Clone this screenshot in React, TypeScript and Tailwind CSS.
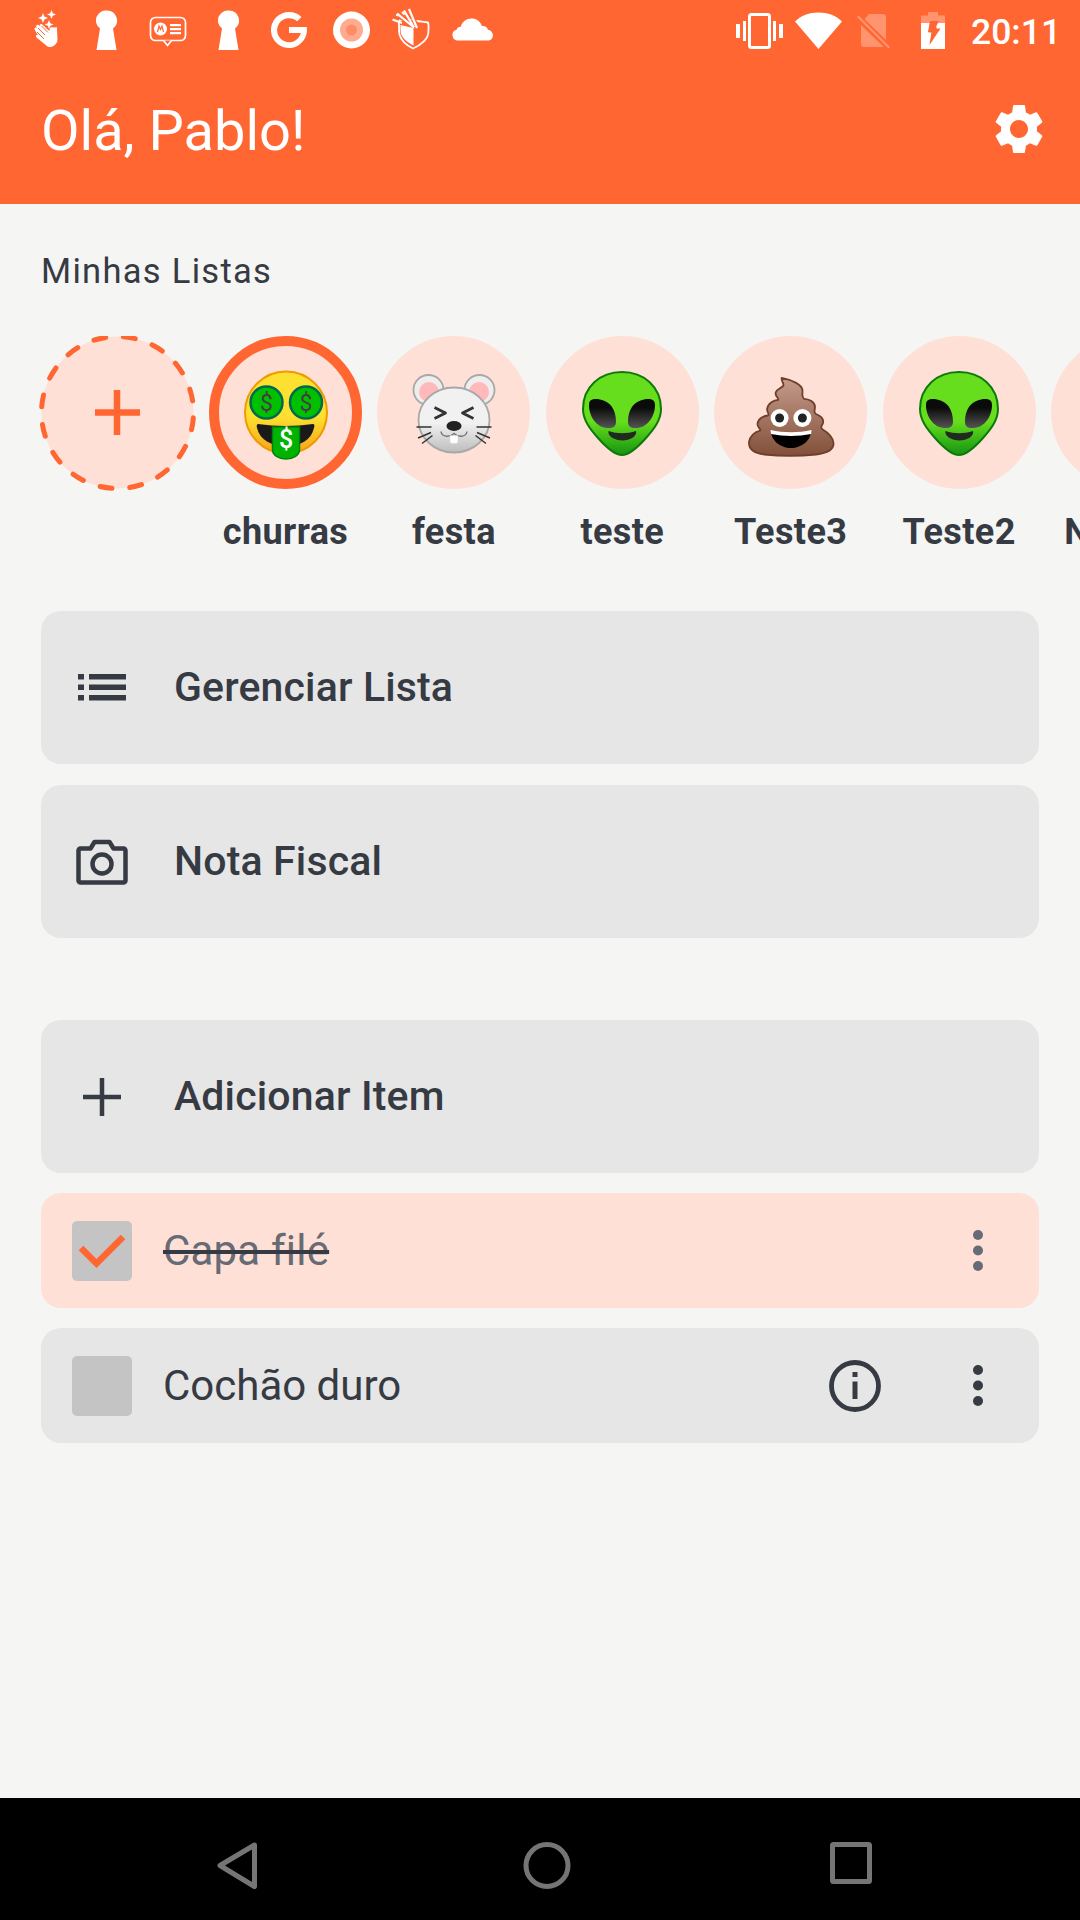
import React from "react";

const INK = "#363a43";
const ORANGE = "#ff6631";

function Sb({ w, ml, children }: { w: number; ml: string; children: React.ReactNode }) {
  return (
    <svg width={w} height={60} viewBox={`0 0 ${w} 60`} className={`shrink-0 ${ml}`}>
      {children}
    </svg>
  );
}

function StatusBar() {
  return (
    <div className="flex h-[60px] items-start text-white">
      <Sb w={26} ml="ml-[33px]">
        <g fill="#fff">
          <path d="M10 13l1.400 3.600L15 18l-3.600 1.400L10 23l-1.400-3.600L5 18l3.600-1.400zM18.500 10l1.300 3.200 3.200 1.300-3.200 1.300-1.300 3.200-1.300-3.200-3.200-1.300 3.200-1.300zM16 20l1.300 3.200 3.200 1.300-3.200 1.300-1.300 3.200-1.300-3.200-3.200-1.300 3.200-1.300z" />
          <path d="M2 30c-1.500-1.500.3-3.500 2-2l-.6-.7c-1-1.600 1-3.300 2.400-2l1 1c-.8-1.600 1.200-3 2.500-1.800l7 6.500.4-2.300c.2-1.400 2.200-1.800 3.800-1.200l3.400-.3.6 12.500c0 3.500-3.500 6.800-7 7.300-2 .2-3.200-.4-4.500-1.700L3.500 37.500c-1.500-1.700.5-3.500 2-2.200-2-2-3-3.400-3.500-5.300z" />
        </g>
        <path d="M5 28l7 7M4 32l7 7M8.500 26l6.500 6.500" stroke={ORANGE} strokeWidth="1" fill="none" />
      </Sb>
      <Sb w={22} ml="ml-[37px]">
        <path d="M11 10.500a10 10 0 0 1 6 18l3.500 21.500H.5L4 28.500a10 10 0 0 1 7-18z" fill="#fff" />
      </Sb>
      <Sb w={38} ml="ml-[31px]">
        <rect x="1.500" y="17.500" width="35" height="23" rx="5" fill="none" stroke="#fff" strokeWidth="1.700" />
        <path d="M14.500 40.500l4 5 4-5" fill={ORANGE} stroke="#fff" strokeWidth="1.700" />
        <circle cx="11.500" cy="29" r="6.500" fill="#fff" />
        <path d="M8.500 32l1.500-6 1.500 3.500L13 26l1.500 6" fill="none" stroke={ORANGE} strokeWidth="1.200" />
        <path d="M21 24h11v2.200H21zM21 28h11v2.200H21zM21 32h11v2.200H21z" fill="#fff" />
      </Sb>
      <Sb w={22} ml="ml-[31px]">
        <path d="M11 10.500a10 10 0 0 1 6 18l3.500 21.500H.5L4 28.500a10 10 0 0 1 7-18z" fill="#fff" />
      </Sb>
      <Sb w={36} ml="ml-[31px]">
        <path d="M18 12a18 18 0 0 1 12.500 5l-4.300 4.300A12 12 0 1 0 29.800 33H18v-6h17.700A18 18 0 1 1 18 12z" fill="#fff" />
      </Sb>
      <Sb w={37} ml="ml-[26px]">
        <circle cx="18.500" cy="30" r="18.500" fill="#fff" />
        <circle cx="18.500" cy="30" r="11.500" fill="#ffab8f" />
        <circle cx="18.500" cy="30" r="5.500" fill="#ff8c66" />
      </Sb>
      <Sb w={40} ml="ml-[21px]">
        <path d="M9 20c5-.5 8 0 12-1 2 1.500 3 1.500 4 2 4 .3 7 1 12 1.500.5 1 .5 8 .3 10.500-.5 6-7 12-15.300 15.500-6-3-12-8-13.500-14-.6-3-.5-7-.5-12z" fill="none" stroke="#fff" strokeWidth="1.800" />
        <path d="M9.500 25l13 3v17.500c-6-3-11-7-12.500-12-.5-2.500-.5-5-.5-8.500z" fill="#fff" />
        <path d="M1 19l9-4 2 1 3-6 3 .5 1-1.500 5 9 6 10-3-1-7-8-5 4-7-4z" fill={ORANGE} />
        <path d="M1.500 19.500l9.500 3.500M6 13.500l17 14M13 10.500l10 17M18 9l8 19" stroke="#fff" strokeWidth="2.200" fill="none" />
        <path d="M5 15l4 .5M11 12l2.500 2.500" stroke="#fff" strokeWidth="2" />
      </Sb>
      <Sb w={42} ml="ml-[20px]">
        <path d="M7 40.500a5.500 5.500 0 0 1-1.500-10.800c.5-2 2.500-3.200 4.300-3 1.300-5 5.500-8.200 10.700-8.200 4.800 0 8.800 2.600 10.400 7.500 3-.5 5.500 1 6 3.800a5.500 5.500 0 0 1 5 5.700c0 2.800-2 5-5 5z" fill="#fff" />
      </Sb>

      <Sb w={47} ml="ml-[243px]">
        <path d="M0 24h4v14H0zM7 21h3v20H7zM37 21h3v20h-3zM43 24h4v14h-4z" fill="#fff" />
        <rect x="13.500" y="14.500" width="20" height="33" rx="2" fill="none" stroke="#fff" strokeWidth="3" />
      </Sb>
      <Sb w={47} ml="ml-[12px]">
        <path d="M0 21.500C6 15.500 14 12.500 23.500 12.500s17.500 3 23.500 9L23.500 49z" fill="#fff" />
      </Sb>
      <Sb w={34} ml="ml-[15px]">
        <g fill="#fff" opacity="0.3">
          <path d="M12 14h15l2 2v24L7.500 19.300z" />
          <path d="M4 25v20l2 2h20.800z" />
          <path d="M0 17l1.500-1.500L33 47l-1.500 1.500z" />
        </g>
      </Sb>
      <Sb w={24} ml="ml-[30px]">
        <path d="M7 12h10v3.500h7V23H0v-7.500h7z" fill="#fff" opacity="0.3" />
        <path d="M0 23h9l-1.500 9.500h5L8 44l8-16.500h-5L17 23h7v26H0z" fill="#fff" />
        <path d="M9 21h8.500l-3 7.500h5L8.500 45l2-13H7z" fill={ORANGE} />
      </Sb>
      <div className="mt-[2px] ml-[26px] text-[35.5px] leading-[60px] font-medium">20:11</div>
    </div>
  );
}

function MoneyFace() {
  return (
    <svg width="100" height="100" viewBox="0 0 100 100">
      <defs>
        <linearGradient id="mf" x1="0" y1="0" x2="0" y2="1">
          <stop offset="0.55" stopColor="#fde030" />
          <stop offset="1" stopColor="#f7a11c" />
        </linearGradient>
      </defs>
      <circle cx="50" cy="49.500" r="41" fill="url(#mf)" stroke="#ee9a00" strokeWidth="2" />
      <circle cx="30.500" cy="39.500" r="16" fill="#00c000" stroke="#006a50" strokeWidth="2.500" />
      <circle cx="70" cy="39.500" r="16" fill="#00c000" stroke="#006a50" strokeWidth="2.500" />
      <text x="30.500" y="47.500" textAnchor="middle" fontSize="23" fill="#404040" fontFamily="Roboto, sans-serif">$</text>
      <text x="70" y="47.500" textAnchor="middle" fontSize="23" fill="#404040" fontFamily="Roboto, sans-serif">$</text>
      <path d="M22 61c18 2.500 37 2.500 55 0 2 0 1.500 3 1 4-3 12-13 18-28 18S24 77 21 65c-.5-1.500-.5-4 1-4z" fill="#1a1a1a" />
      <path d="M36.500 64h27v23a12 8 0 0 1-27 0z" fill="#00b300" stroke="#00810f" strokeWidth="1.500" />
      <text x="50" y="85" textAnchor="middle" fontSize="25" fontWeight="500" fill="#fff" fontFamily="Roboto, sans-serif">$</text>
    </svg>
  );
}

function MouseFace() {
  return (
    <svg width="100" height="100" viewBox="0 0 100 100">
      <defs>
        <linearGradient id="mo" x1="0" y1="0" x2="0" y2="1">
          <stop offset="0.55" stopColor="#f1f1f1" />
          <stop offset="1" stopColor="#bdbdbd" />
        </linearGradient>
      </defs>
      <circle cx="24.500" cy="27" r="15" fill="#eeeeee" stroke="#a8a8a8" strokeWidth="1.800" />
      <circle cx="75.500" cy="27" r="15" fill="#eeeeee" stroke="#a8a8a8" strokeWidth="1.800" />
      <circle cx="25" cy="29" r="10" fill="#ffb9bb" />
      <circle cx="75" cy="29" r="10" fill="#ffb9bb" />
      <ellipse cx="50" cy="57" rx="35.500" ry="32.500" fill="url(#mo)" stroke="#a8a8a8" strokeWidth="1.800" />
      <path d="M30.500 44.500l11 5.500-11 5.500M69.500 44.500l-11 5.500 11 5.500" fill="none" stroke="#333" strokeWidth="2.800" strokeLinejoin="round" />
      <path d="M37 68.500c1 6 9 6 13 2 4 4 12 4 13-2" fill="none" stroke="#777" strokeWidth="1.500" />
      <path d="M46 72.500h8v6a2 2 0 0 1-2 2h-4a2 2 0 0 1-2-2z" fill="#fff" stroke="#ccc" strokeWidth="0.400" />
      <ellipse cx="50" cy="63" rx="7.500" ry="5" fill="#222" />
      <path d="M12.500 64h15M14 75l13-5.500M18 80.500l10.500-8M87.500 64h-15M86 75l-13-5.500M82 80.500l-10.500-8" stroke="#333" strokeWidth="1.500" fill="none" />
    </svg>
  );
}

function AlienFace() {
  return (
    <svg width="100" height="100" viewBox="0 0 100 100">
      <defs>
        <linearGradient id="al" x1="0" y1="0" x2="0" y2="1">
          <stop offset="0.6" stopColor="#66dd1d" />
          <stop offset="1" stopColor="#159312" />
        </linearGradient>
        <linearGradient id="ale" x1="0" y1="0" x2="0" y2="1">
          <stop offset="0.3" stopColor="#0b0b0b" />
          <stop offset="1" stopColor="#555" />
        </linearGradient>
      </defs>
      <path d="M50 9c22 0 39 15 39 37 0 11-7 20-15 29-8 9-17 17-24 17s-16-8-24-17C18 66 11 57 11 46 11 24 28 9 50 9z" fill="url(#al)" stroke="#0b7a0b" strokeWidth="2" />
      <path d="M17 42c0-6 5-6.500 11-5.500 10 1.500 16 10 16 22 0 6-4 7-9 6.500-10-.5-18-11-18-23z" fill="url(#ale)" />
      <path d="M83 42c0-6-5-6.500-11-5.500-10 1.500-16 10-16 22 0 6 4 7 9 6.500 10-.5 18-11 18-23z" fill="url(#ale)" />
      <path d="M36.500 68c9 3 18 3 27.500 0 1.500 5-6 9.500-13.500 9.500S35 73 36.500 68z" fill="#22291e" />
    </svg>
  );
}

function PoopFace() {
  return (
    <svg width="100" height="100" viewBox="0 0 100 100">
      <defs>
        <linearGradient id="po" x1="0" y1="0" x2="0" y2="1">
          <stop offset="0" stopColor="#c69c8c" />
          <stop offset="1" stopColor="#82503a" />
        </linearGradient>
      </defs>
      <path
        d="M40.700 14.800C52 17 61 22 61.400 27C62 31 60 33 63 35.800C68 36 74 39 74 44C74 48 72 49 75 51C80 53 83 56 82 60C81 63 79 64 81 66C86 69 92 73 92.500 80C93 86 88 90 75 91.500C60 93 38 93 23.400 91.500C12 90 7.500 86 8 79C9 73 14 69 19.300 67.500C20 66 16 64 16.500 60.800C17 56 22 53 27 52.500C29 51 25.500 49 26.200 45.800C27 40 33 37 37.200 36.800C38 35 33.500 33 34.800 29.200C36 26 41 25 42.400 22.500C43 20 40 18 40.700 14.800z"
        fill="url(#po)"
        stroke="#6d3f2c"
        strokeWidth="1.800"
        strokeLinejoin="round"
      />
      <circle cx="38.600" cy="55" r="9" fill="#fff" />
      <circle cx="61.400" cy="55" r="9" fill="#fff" />
      <circle cx="38.600" cy="55" r="4.500" fill="#222" />
      <circle cx="61.400" cy="55" r="4.500" fill="#222" />
      <path d="M30 68c13 2.500 27 2.500 40 0 0 9-9 17-20 17s-20-8-20-17z" fill="#000" />
      <path d="M29.500 67c13.500 3 27.500 3 41 0l-.4 4c-13.500 2.500-26.700 2.500-40 0z" fill="#fff" />
    </svg>
  );
}

function Bubble({ label, active, children }: { label: string; active?: boolean; children?: React.ReactNode }) {
  return (
    <div className="flex w-[153px] shrink-0 flex-col items-center">
      <div
        className={`flex h-[153px] w-[153px] items-center justify-center rounded-full bg-[#ffe0d6] ${active ? "border-[10px] border-[#ff6631]" : ""}`}
      >
        {children}
      </div>
      <div className="mt-[23px] text-[36px] leading-[40px] font-bold tracking-[0.4px] whitespace-nowrap text-[#363a43]">{label}</div>
    </div>
  );
}

function Card({ icon, label }: { icon: React.ReactNode; label: string }) {
  return (
    <div className="flex h-[153px] items-center rounded-[20px] bg-[#e6e6e6]">
      <div className="flex w-[122px] justify-center">{icon}</div>
      <div className="ml-[11px] text-[41px] font-medium tracking-[0.15px] text-[#363a43]">{label}</div>
    </div>
  );
}

function Dots({ color }: { color: string }) {
  return (
    <svg width="10" height="42" viewBox="0 0 10 42" fill={color} className="ml-[92px]">
      <circle cx="5" cy="5" r="5" />
      <circle cx="5" cy="20.500" r="5" />
      <circle cx="5" cy="36" r="5" />
    </svg>
  );
}

export default function App() {
  return (
    <div className="flex h-[1920px] w-[1080px] flex-col overflow-hidden bg-[#f5f5f3] font-['Roboto',sans-serif]">
      <header className="h-[204px] shrink-0 bg-[#ff6631] text-white">
        <StatusBar />
        <div className="mt-[36px] flex items-center justify-between pr-[31px] pl-[41px]">
          <h1 className="text-[56px] leading-[70px] font-normal">Olá, Pablo!</h1>
          <svg width="60" height="60" viewBox="0 0 24 24" fill="#fff" className="-mt-[4px]">
            <path d="M19.14 12.94c.04-.3.06-.61.06-.94 0-.32-.02-.64-.07-.94l2.03-1.58c.18-.14.23-.41.12-.61l-1.92-3.32c-.12-.22-.37-.29-.59-.22l-2.39.96c-.5-.38-1.03-.7-1.62-.94l-.36-2.54c-.04-.24-.24-.41-.48-.41h-3.84c-.24 0-.43.17-.47.41l-.36 2.54c-.59.24-1.13.57-1.62.94l-2.39-.96c-.22-.08-.47 0-.59.22L2.74 8.87c-.12.21-.08.47.12.61l2.03 1.58c-.05.3-.09.63-.09.94s.02.64.07.94l-2.03 1.58c-.18.14-.23.41-.12.61l1.92 3.32c.12.22.37.29.59.22l2.39-.96c.5.38 1.03.7 1.62.94l.36 2.54c.05.24.24.41.48.41h3.84c.24 0 .44-.17.47-.41l.36-2.54c.59-.24 1.13-.56 1.62-.94l2.39.96c.22.08.47 0 .59-.22l1.92-3.32c.12-.22.07-.47-.12-.61l-2.01-1.58zM12 15.6c-1.98 0-3.6-1.62-3.6-3.6s1.62-3.6 3.6-3.6 3.6 1.62 3.6 3.6-1.62 3.6-3.6 3.6z" />
          </svg>
        </div>
      </header>

      <main className="flex flex-1 flex-col">
        <div className="mt-[47px] pl-[41px] text-[34.500px] leading-[40px] tracking-[1.3px] text-[#363a43]">Minhas Listas</div>

        <div className="mt-[45px] flex gap-[15.4px] overflow-hidden pl-[39px]">
          <div className="-mt-[2px] -mr-[2.400px] h-[157px] w-[157px] shrink-0">
            <svg width="157" height="157" viewBox="0 0 157 157">
              <circle cx="78.500" cy="78.500" r="76" fill="#ffe0d6" />
              <circle cx="78.500" cy="78.500" r="76" fill="none" stroke="#ff6631" strokeWidth="5" strokeLinecap="round" strokeDasharray="12 17.850" transform="rotate(4 78.500 78.500)" />
              <path d="M78 56v45M56 78.500h45" stroke="#ff6631" strokeWidth="6.500" fill="none" />
            </svg>
          </div>
          <Bubble label="churras" active><MoneyFace /></Bubble>
          <Bubble label="festa"><MouseFace /></Bubble>
          <Bubble label="teste"><AlienFace /></Bubble>
          <Bubble label="Teste3"><PoopFace /></Bubble>
          <Bubble label="Teste2"><AlienFace /></Bubble>
          <Bubble label="Nova12" />
        </div>

        <div className="mt-[59px] flex flex-col px-[41px]">
          <Card
            label="Gerenciar Lista"
            icon={
              <svg width="48" height="27" viewBox="0 0 48 27" fill={INK}>
                <path d="M0 0h6v5.500H0zM0 10.500h6V16H0zM0 21h6v5.500H0zM11 0h37v5.500H11zM11 10.500h37V16H11zM11 21h37v5.500H11z" />
              </svg>
            }
          />
          <div className="h-[21px]" />
          <Card
            label="Nota Fiscal"
            icon={
              <svg width="52" height="46" viewBox="0 0 52 46" fill="none" stroke={INK} strokeWidth="4.500" strokeLinejoin="round">
                <path d="M2.500 11.500a2 2 0 0 1 2-2h10l4-6.500h15l4 6.500h10a2 2 0 0 1 2 2v30a2 2 0 0 1-2 2h-43a2 2 0 0 1-2-2z" />
                <circle cx="26" cy="25" r="9.500" />
              </svg>
            }
          />
          <div className="h-[82px]" />
          <Card
            label="Adicionar Item"
            icon={
              <svg width="38" height="38" viewBox="0 0 38 38" stroke={INK} strokeWidth="4.500" fill="none">
                <path d="M19 0v38M0 19h38" />
              </svg>
            }
          />
          <div className="h-[20px]" />
          <div className="flex h-[115px] items-center rounded-[20px] bg-[#ffe0d6] pr-[56px] pl-[31px]">
            <div className="flex h-[60px] w-[60px] shrink-0 items-center justify-center rounded-[5px] bg-[#c4c4c4]">
              <svg width="60" height="60" viewBox="0 0 60 60" fill="none">
                <path d="M9 27l15.500 15.500L51 16" stroke="#ff6631" strokeWidth="6.500" />
              </svg>
            </div>
            <div className="ml-[31px] flex-1 text-[42px] tracking-[0.2px] text-[#666b75] line-through decoration-[#363a43]">Capa filé</div>
            <Dots color="#666b75" />
          </div>
          <div className="h-[20px]" />
          <div className="flex h-[115px] items-center rounded-[20px] bg-[#e6e6e6] pr-[56px] pl-[31px]">
            <div className="h-[60px] w-[60px] shrink-0 rounded-[5px] bg-[#c4c4c4]" />
            <div className="ml-[31px] flex-1 text-[42px] text-[#363a43]">Cochão duro</div>
            <svg width="52" height="52" viewBox="0 0 52 52" fill="none">
              <circle cx="26" cy="26" r="23.500" stroke={INK} strokeWidth="4.800" />
              <path d="M23.500 12h5v5h-5zM23.500 21.500h5V39h-5z" fill={INK} />
            </svg>
            <Dots color={INK} />
          </div>
        </div>
      </main>

      <nav className="relative flex h-[122px] shrink-0 items-start bg-black pt-[44px]">
        <svg width="40" height="47" viewBox="0 0 40 47" className="ml-[217px]" fill="none" stroke="#757575" strokeWidth="5" strokeLinejoin="round">
          <path d="M37.500 3L3 23.500l34.500 21z" />
        </svg>
        <svg width="48" height="47" viewBox="0 0 48 47" className="ml-[266px]" fill="none" stroke="#757575" strokeWidth="5">
          <circle cx="24" cy="23.500" r="21" />
        </svg>
        <svg width="42" height="42" viewBox="0 0 42 42" className="ml-[259px]" fill="none" stroke="#757575" strokeWidth="5" strokeLinejoin="round">
          <rect x="2.500" y="2.500" width="37" height="37" rx="1" />
        </svg>
      </nav>
    </div>
  );
}
